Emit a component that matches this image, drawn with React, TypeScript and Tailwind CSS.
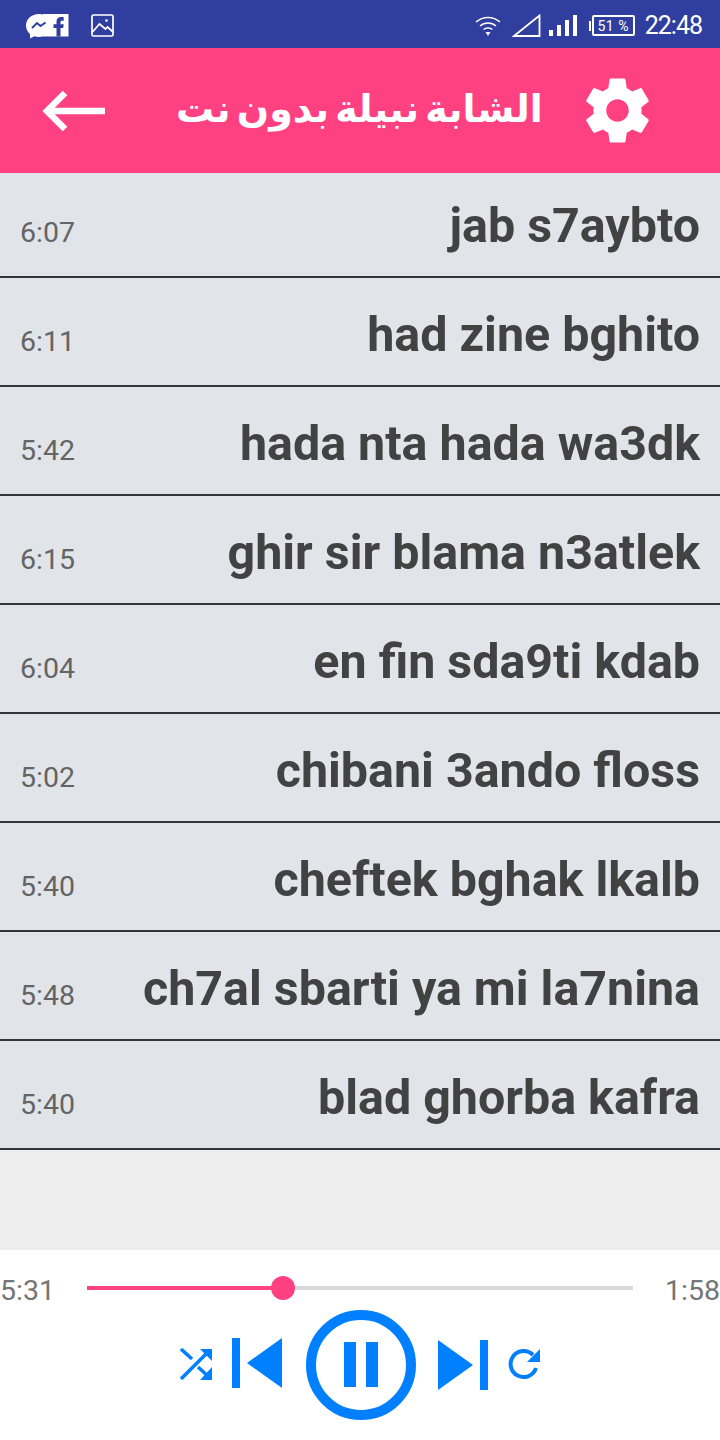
const songs = [
  { title: 'jab s7aybto', time: '6:07' },
  { title: 'had zine bghito', time: '6:11' },
  { title: 'hada nta hada wa3dk', time: '5:42' },
  { title: 'ghir sir blama n3atlek', time: '6:15' },
  { title: 'en fin sda9ti kdab', time: '6:04' },
  { title: 'chibani 3ando floss', time: '5:02' },
  { title: 'cheftek bghak lkalb', time: '5:40' },
  { title: 'ch7al sbarti ya mi la7nina', time: '5:48' },
  { title: 'blad ghorba kafra', time: '5:40' },
];

function StatusBar() {
  return (
    <div className="h-[48px] bg-[#303f9f] flex items-center text-white shrink-0">
      {/* Notification icons */}
      <div className="flex items-center ml-[25px] mt-[3px]">
        <svg width="44" height="26" viewBox="0 0 44 26">
          <path fill="#fff" d="M14 1C6.500 1 1 6 1 12.500c0 3.500 1.500 6.500 4 8.500v4.500l4.200-2.300c1.500.5 3 .8 4.800.8 1.500 0 3-.2 4.300-.7V1.500C17 1.200 15.500 1 14 1z" />
          <path fill="#fff" d="M18 1h25.500v22.500H18z" />
          <path fill="none" stroke="#303f9f" strokeWidth="2" d="M7 15l5-5 3.500 3 5-3.500" />
          <path fill="#303f9f" d="M31.500 23.500V15h-3v-3.800h3V8.500C31.500 5.500 33.200 4 36 4h2.700v3.700H37c-1.200 0-1.500.6-1.500 1.500v2h3.200l-.5 3.800h-2.700v8.500z" />
        </svg>
        <svg className="ml-[22px]" width="24" height="24" viewBox="0 0 24 24" fill="none" stroke="#fff">
          <rect x="1" y="1" width="21" height="21" rx="1.500" strokeWidth="1.700" />
          <path strokeWidth="1.700" d="M1.500 18l7-8 6 5 2-2 5.500 5" />
          <circle cx="15.500" cy="6.500" r="1.300" fill="#fff" stroke="none" />
        </svg>
      </div>

      {/* System icons */}
      <div className="ml-auto flex items-center pr-[18px] mt-[3px]">
        <svg width="26" height="22" viewBox="0 0 26 22" fill="none" stroke="#fff" strokeWidth="1.500">
          <path d="M1 7c7-6 17-6 24 0" />
          <path d="M5 11c4.500-4 11.500-4 16 0" />
          <path d="M8.500 14.500c2.500-2 6.500-2 9 0" />
          <path fill="#fff" stroke="none" d="M10.500 17h5L13 21z" />
        </svg>
        <svg className="ml-[11px]" width="29" height="23" viewBox="0 0 29 23" fill="none" stroke="#fff" strokeWidth="1.800">
          <path d="M2 22L27.500 1.500V22z" />
        </svg>
        <svg className="ml-[8px]" width="28" height="22" viewBox="0 0 28 22" fill="#fff">
          <rect x="0" y="15" width="4" height="6" />
          <rect x="8" y="10" width="4" height="11" />
          <rect x="16" y="5" width="4" height="16" />
          <rect x="24" y="0" width="4" height="21" />
        </svg>
        <div className="ml-[12px] w-[2px] h-[10px] bg-white" />
        <div className="ml-[1px] w-[43px] h-[21px] border-2 border-white rounded-[2px] flex items-center justify-center text-[14px] leading-none tracking-[0.5px]">
          51 %
        </div>
        <span className="ml-[10px] text-[25px] leading-none tracking-[-1px]">22:48</span>
      </div>
    </div>
  );
}

function Header() {
  return (
    <div className="h-[125px] bg-[#ff4081] flex items-center text-white shrink-0">
      <svg className="ml-[42px] blur-[0.5px]" width="64" height="42" viewBox="0 0 64 42" fill="none" stroke="#fff" strokeWidth="6.500">
        <path d="M63 21H5" />
        <path d="M23 3L5 21l18 18" />
      </svg>
      <span
        dir="rtl"
        className="ml-[70px] mt-[-4px] text-[38px] leading-none font-bold font-['DejaVu_Sans',sans-serif] [word-spacing:-7px]"
      >
        الشابة نبيلة بدون نت
      </span>
      <svg className="ml-auto mr-[64px] blur-[0.5px]" width="77" height="77" viewBox="0 0 24 24" fill="#fff">
        <path d="M19.430 12.980c.04-.32.07-.64.07-.98s-.03-.66-.07-.98l2.110-1.650c.19-.15.24-.42.12-.64l-2-3.460c-.12-.22-.39-.3-.61-.22l-2.490 1c-.52-.4-1.080-.73-1.690-.98l-.38-2.650C14.460 2.180 14.250 2 14 2h-4c-.25 0-.46.18-.49.420l-.38 2.650c-.61.25-1.170.59-1.690.98l-2.490-1c-.23-.09-.49 0-.61.220l-2 3.460c-.13.220-.07.490.12.640l2.110 1.650c-.04.320-.07.650-.07.980s.03.660.07.980l-2.110 1.650c-.19.150-.24.420-.12.640l2 3.460c.12.220.39.300.61.220l2.490-1c.52.400 1.080.730 1.690.980l.38 2.650c.03.240.24.420.49.420h4c.25 0 .46-.18.49-.42l.38-2.650c.61-.25 1.170-.59 1.690-.98l2.490 1c.23.090.49 0 .61-.22l2-3.460c.12-.22.070-.49-.12-.64l-2.110-1.650zM12 15.500c-1.930 0-3.500-1.570-3.500-3.500s1.570-3.500 3.500-3.500 3.500 1.570 3.500 3.500-1.570 3.500-3.500 3.500z" />
      </svg>
    </div>
  );
}

function SongRow({ title, time }: { title: string; time: string }) {
  return (
    <div className="h-[109px] first:h-[105px] border-b-2 border-[#33373b] bg-[#e1e4e9] flex items-end justify-between pl-[20px] pr-[20px]">
      <span className="text-[28.5px] leading-none text-[#646464] pb-[29px]">{time}</span>
      <span className="text-[48.4px] leading-none font-bold text-[#424242] pb-[26px]">{title}</span>
    </div>
  );
}

function Player() {
  return (
    <div className="h-[190px] bg-white shrink-0 flex flex-col">
      <div className="flex items-center h-[76px]">
        <span className="w-[87px] mt-[6px] text-[28.5px] leading-none text-[#757575]">5:31</span>
        <div className="relative w-[546px] h-[4px] bg-[#d9d9d9]">
          <div className="h-full w-[196px] bg-[#ff4081]" />
          <div className="absolute left-[184px] top-[-10px] w-[24px] h-[24px] rounded-full bg-[#ff4081]" />
        </div>
        <span className="ml-auto mt-[6px] text-[28.5px] leading-none text-[#757575]">1:58</span>
      </div>
      <div className="flex items-start pl-[180px] mt-[-16px] text-[#007fff]">
        <svg className="mt-[38px]" width="32" height="32" viewBox="0 0 32 32" fill="none" stroke="currentColor" strokeWidth="3.500">
          <path d="M1 1l11 10" />
          <path d="M1 31L28 4" />
          <path d="M18 19l11 10" />
          <path fill="currentColor" stroke="none" d="M20 1h12v12z" />
          <path fill="currentColor" stroke="none" d="M32 19v13H20z" />
        </svg>
        <svg className="ml-[20px] mt-[28px]" width="50" height="50" viewBox="0 0 50 50" fill="currentColor">
          <rect x="0" y="0" width="8" height="50" />
          <path d="M50 0v50L15 25z" />
        </svg>
        <svg className="ml-[24px] blur-[0.5px]" width="110" height="110" viewBox="0 0 110 110" fill="none" stroke="currentColor" strokeWidth="10">
          <circle cx="55" cy="55" r="50" />
          <path fill="currentColor" stroke="none" d="M38 32h12v45H38zM60 32h12v45H60z" />
        </svg>
        <svg className="ml-[22px] mt-[30px]" width="50" height="50" viewBox="0 0 50 50" fill="currentColor">
          <rect x="42" y="0" width="8" height="50" />
          <path d="M0 0v50l35-25z" />
        </svg>
        <svg className="ml-[20px] mt-[38px]" width="32" height="32" viewBox="0 0 32 32" fill="none" stroke="currentColor" strokeWidth="4">
          <path d="M28 20a13 13 0 1 1-3-13" />
          <path fill="currentColor" stroke="none" d="M32 1v13H19z" />
        </svg>
      </div>
    </div>
  );
}

export default function App() {
  return (
    <div className="w-[720px] h-[1440px] flex flex-col overflow-hidden bg-[#eeeeee] font-['Roboto',sans-serif]">
      <StatusBar />
      <Header />
      <div className="flex-1 flex flex-col">
        {songs.map((song) => (
          <SongRow key={song.title} title={song.title} time={song.time} />
        ))}
      </div>
      <Player />
    </div>
  );
}
